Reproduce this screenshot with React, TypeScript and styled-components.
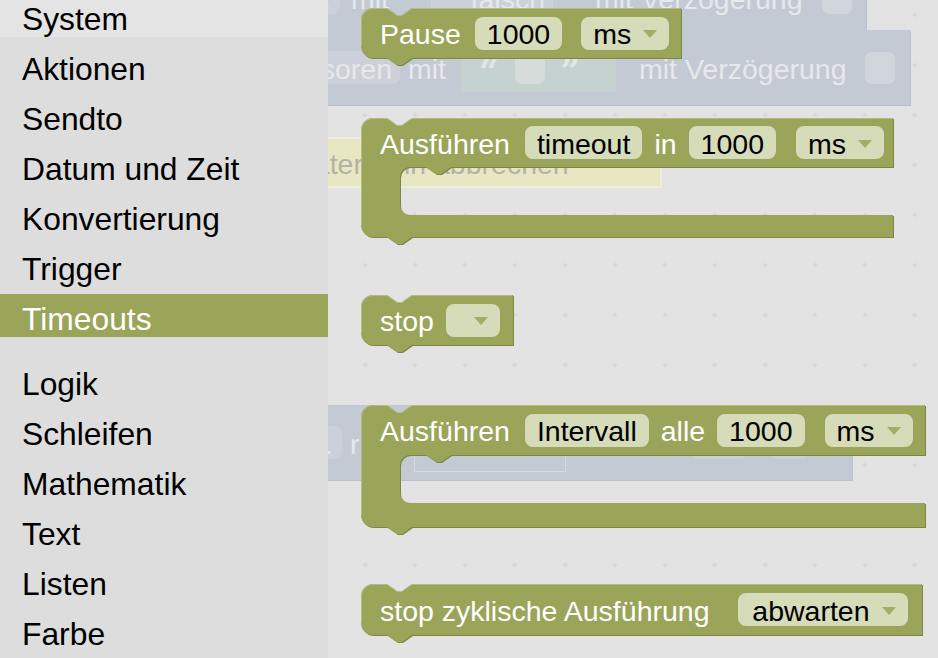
import React from "react";
import styled, { createGlobalStyle } from "styled-components";

const GREEN = "#9aa55a";
const DARK = "#7c8645";
const LIGHT = "#b4bc7f";

const GlobalStyle = createGlobalStyle`
  html, body {
    margin: 0;
    padding: 0;
  }
  body {
    width: 938px;
    height: 658px;
    overflow: hidden;
    font-family: "Liberation Sans", Arial, Helvetica, sans-serif;
  }
`;

const Screen = styled.div`
  display: flex;
  width: 938px;
  height: 658px;
  overflow: hidden;
`;

const Toolbox = styled.nav`
  width: 328px;
  flex: none;
  display: flex;
  flex-direction: column;
  background: #dddddd;
`;

const Category = styled.div<{ $selected?: boolean; $hover?: boolean; $cut?: boolean }>`
  height: ${(p) => (p.$cut ? 37 : 43)}px;
  margin-bottom: 7px;
  padding: ${(p) => (p.$cut ? 1 : 7)}px 0 0 22px;
  box-sizing: border-box;
  font-size: 31.8px;
  line-height: 36px;
  white-space: nowrap;
  color: ${(p) => (p.$selected ? "#ffffff" : "#000000")};
  background: ${(p) => (p.$selected ? GREEN : p.$hover ? "#e4e4e4" : "transparent")};
`;

const Separator = styled.div`
  height: 1px;
  margin: 4px 0 11px;
  background: #ececec;
`;

const Workspace = styled.main`
  position: relative;
  flex: 1;
  overflow: hidden;
  background: #e3e3e3;
`;

const Grid = styled.svg`
  position: absolute;
  left: 0;
  top: 0;
  width: 100%;
  height: 100%;
`;

/* faded workspace blocks seen behind the flyout */
const Ghost = styled.div<{ $x: number; $y: number; $w: number; $h: number; $tone: "blue" | "note" }>`
  position: absolute;
  left: ${(p) => p.$x}px;
  top: ${(p) => p.$y}px;
  width: ${(p) => p.$w}px;
  height: ${(p) => p.$h}px;
  box-sizing: border-box;
  display: flex;
  align-items: center;
  font-size: 28.5px;
  white-space: nowrap;
  background: ${(p) => (p.$tone === "note" ? "#e8e7c4" : "#c4cad4")};
  border: ${(p) => (p.$tone === "note" ? "2px solid #eeedd6" : "none")};
  box-shadow: ${(p) => (p.$tone === "note" ? "none" : "1px 1px 0 #b9c0cb")};
  color: ${(p) => (p.$tone === "note" ? "#b3b3a6" : "#e6e8ec")};
`;

const GhostText = styled.span<{ $ml?: number }>`
  margin-left: ${(p) => p.$ml ?? 0}px;
  padding-top: 4px;
`;

const GhostField = styled.span<{ $ml?: number; $w: number }>`
  display: inline-flex;
  align-items: center;
  justify-content: flex-end;
  width: ${(p) => p.$w}px;
  height: 33px;
  margin-left: ${(p) => p.$ml ?? 0}px;
  padding: 3px 8px 0;
  box-sizing: border-box;
  border-radius: 8px;
  background: #ccd1d9;
  flex: none;
`;

const GhostCheck = styled.span<{ $ml?: number }>`
  width: 30px;
  height: 32px;
  margin-left: ${(p) => p.$ml ?? 0}px;
  border-radius: 7px;
  background: #d1d5dc;
  flex: none;
`;

const GhostSocket = styled.span<{ $ml?: number; $w: number }>`
  align-self: flex-end;
  width: ${(p) => p.$w}px;
  height: 30px;
  margin: 0 0 8px ${(p) => p.$ml ?? 0}px;
  border: 1px solid #d5dae1;
  box-sizing: border-box;
  flex: none;
`;

const GhostValue = styled.span<{ $ml?: number }>`
  display: inline-flex;
  align-items: center;
  gap: 16px;
  width: 155px;
  height: 49px;
  margin-left: ${(p) => p.$ml ?? 0}px;
  padding: 6px 0 0 18px;
  box-sizing: border-box;
  border-radius: 10px 0 0 0;
  background: #c6d2cf;
  color: #e1e7e4;
  font-family: "DejaVu Serif", "Liberation Serif", serif;
  font-size: 34px;
  font-weight: bold;
  flex: none;
`;

const GhostValueField = styled.span`
  width: 30px;
  height: 33px;
  margin-top: -6px;
  border-radius: 7px;
  background: #d5dcd9;
`;

/* flyout blocks */
const BlockFrame = styled.div<{ $x: number; $y: number; $w: number; $h: number }>`
  position: absolute;
  left: ${(p) => p.$x}px;
  top: ${(p) => p.$y}px;
  width: ${(p) => p.$w}px;
  height: ${(p) => p.$h}px;
`;

const Shape = styled.svg`
  position: absolute;
  left: 0;
  top: 0;
  overflow: visible;
`;

const BlockRow = styled.div<{ $h: number }>`
  position: relative;
  height: ${(p) => p.$h}px;
  display: flex;
  align-items: center;
  gap: 12px;
  padding-left: 19px;
  font-size: 28.5px;
  color: #ffffff;
  white-space: nowrap;
`;

const Label = styled.span`
  padding-top: 3px;
`;

const Field = styled.span<{ $ml?: number; $w?: number }>`
  display: inline-flex;
  align-items: center;
  justify-content: ${(p) => (p.$w ? "flex-end" : "flex-start")};
  gap: 12px;
  height: 33px;
  min-width: ${(p) => p.$w ?? 0}px;
  margin-left: ${(p) => p.$ml ?? 0}px;
  padding: 3px 12px 0;
  box-sizing: border-box;
  border-radius: 8px;
  background: #d6dbb9;
  color: #000000;
`;

const Arrow = styled.span`
  width: 0;
  height: 0;
  margin-top: -1px;
  border-left: 7px solid transparent;
  border-right: 7px solid transparent;
  border-top: 8px solid #a3ad66;
`;

type Mouth = { left: number; top: number; height: number };

const R = 12;
const NX = 26;

function outline(w: number, h: number, m?: Mouth) {
  let d = `M 0,${R} A ${R},${R} 0 0 1 ${R},0 H ${NX} l 10,7 l 5,0 l 10,-7 H ${w} V ${m ? m.top : h}`;
  if (m) {
    const ri = 10;
    const y2 = m.top + m.height;
    d += ` H ${m.left + NX + 25} l -10,7 l -5,0 l -10,-7 H ${m.left + ri}`;
    d += ` A ${ri},${ri} 0 0 0 ${m.left},${m.top + ri} V ${y2 - ri}`;
    d += ` A ${ri},${ri} 0 0 0 ${m.left + ri},${y2} H ${w} V ${h}`;
  }
  d += ` H ${NX + 25} l -10,7 l -5,0 l -10,-7 H ${R} A ${R},${R} 0 0 1 0,${h - R} Z`;
  return d;
}

function Block({
  x,
  y,
  w,
  h,
  mouth,
  children,
}: {
  x: number;
  y: number;
  w: number;
  h: number;
  mouth?: Mouth;
  children: React.ReactNode;
}) {
  const d = outline(w, h, mouth);
  const edge = `M 0.5,${h - R} V ${R} A ${R - 0.5},${R - 0.5} 0 0 1 ${R},0.5 H ${NX} l 10,7 l 5,0 l 10,-7 H ${w - 1}`;
  return (
    <BlockFrame $x={x} $y={y} $w={w} $h={h}>
      <Shape width={w + 2} height={h + 9}>
        <path d={d} fill={DARK} transform="translate(1,1)" />
        <path d={d} fill={GREEN} />
        <path d={edge} fill="none" stroke={LIGHT} strokeWidth={1} />
      </Shape>
      <BlockRow $h={mouth ? mouth.top : h}>{children}</BlockRow>
    </BlockFrame>
  );
}

const topCategories = ["System", "Aktionen", "Sendto", "Datum und Zeit", "Konvertierung", "Trigger", "Timeouts"];
const lowerCategories = ["Logik", "Schleifen", "Mathematik", "Text", "Listen", "Farbe"];

export default function App() {
  return (
    <Screen>
      <GlobalStyle />
      <Toolbox>
        {topCategories.map((name, i) => (
          <Category key={name} $cut={i === 0} $hover={i === 0} $selected={name === "Timeouts"}>
            {name}
          </Category>
        ))}
        <Separator />
        {lowerCategories.map((name) => (
          <Category key={name}>{name}</Category>
        ))}
      </Toolbox>

      <Workspace>
        <Grid>
          <defs>
            <pattern id="dots" width="50" height="50" x="12" y="-10" patternUnits="userSpaceOnUse">
              <path d="M 22.5,25 H 27.5 M 25,22.5 V 27.5" stroke="#d2d2d2" strokeWidth="1" />
            </pattern>
          </defs>
          <rect width="100%" height="100%" fill="url(#dots)" />
        </Grid>

        <Ghost $tone="blue" $x={-50} $y={-35} $w={588} $h={65}>
          <GhostField $w={62}>…</GhostField>
          <GhostText $ml={11}>mit</GhostText>
          <GhostField $ml={42} $w={122}>falsch</GhostField>
          <GhostText $ml={42}>mit Verzögerung</GhostText>
          <GhostCheck $ml={19} />
        </Ghost>

        <Ghost $tone="blue" $x={-50} $y={30} $w={632} $h={75}>
          <GhostField $ml={-20} $w={142}>Sensoren</GhostField>
          <GhostText $ml={8}>mit</GhostText>
          <GhostValue $ml={15}>
            “<GhostValueField />”
          </GhostValue>
          <GhostText $ml={23}>mit Verzögerung</GhostText>
          <GhostCheck $ml={18} />
        </Ghost>

        <Ghost $tone="note" $x={-80} $y={137} $w={414} $h={51}>
          <GhostText $ml={-46}>Timer später</GhostText>
          <GhostText $ml={41}>in abbrechen</GhostText>
        </Ghost>

        <Ghost $tone="blue" $x={-50} $y={405} $w={574} $h={75}>
          <GhostField $w={64}>…</GhostField>
          <GhostText $ml={8}>r</GhostText>
          <GhostSocket $ml={54} $w={152} />
          <GhostField $ml={125} $w={56} />
          <GhostField $ml={22} $w={40} />
        </Ghost>

        <Block x={33} y={8} w={320} h={50}>
          <Label>Pause</Label>
          <Field $ml={2}>1000</Field>
          <Field $ml={7}>
            ms
            <Arrow />
          </Field>
        </Block>

        <Block x={33} y={118} w={532} h={119} mouth={{ left: 39, top: 49, height: 48 }}>
          <Label>Ausführen</Label>
          <Field $ml={3}>timeout</Field>
          <Label>in</Label>
          <Field>1000</Field>
          <Field $ml={8}>
            ms
            <Arrow />
          </Field>
        </Block>

        <Block x={33} y={295} w={152} h={50}>
          <Label>stop</Label>
          <Field $w={54}>
            <Arrow />
          </Field>
        </Block>

        <Block x={33} y={405} w={564} h={122} mouth={{ left: 39, top: 50, height: 48 }}>
          <Label>Ausführen</Label>
          <Field $ml={3}>Intervall</Field>
          <Label>alle</Label>
          <Field>1000</Field>
          <Field $ml={8}>
            ms
            <Arrow />
          </Field>
        </Block>

        <Block x={33} y={584} w={561} h={51}>
          <Label>stop zyklische Ausführung</Label>
          <Field $ml={16} $w={170}>
            abwarten
            <Arrow />
          </Field>
        </Block>
      </Workspace>
    </Screen>
  );
}
